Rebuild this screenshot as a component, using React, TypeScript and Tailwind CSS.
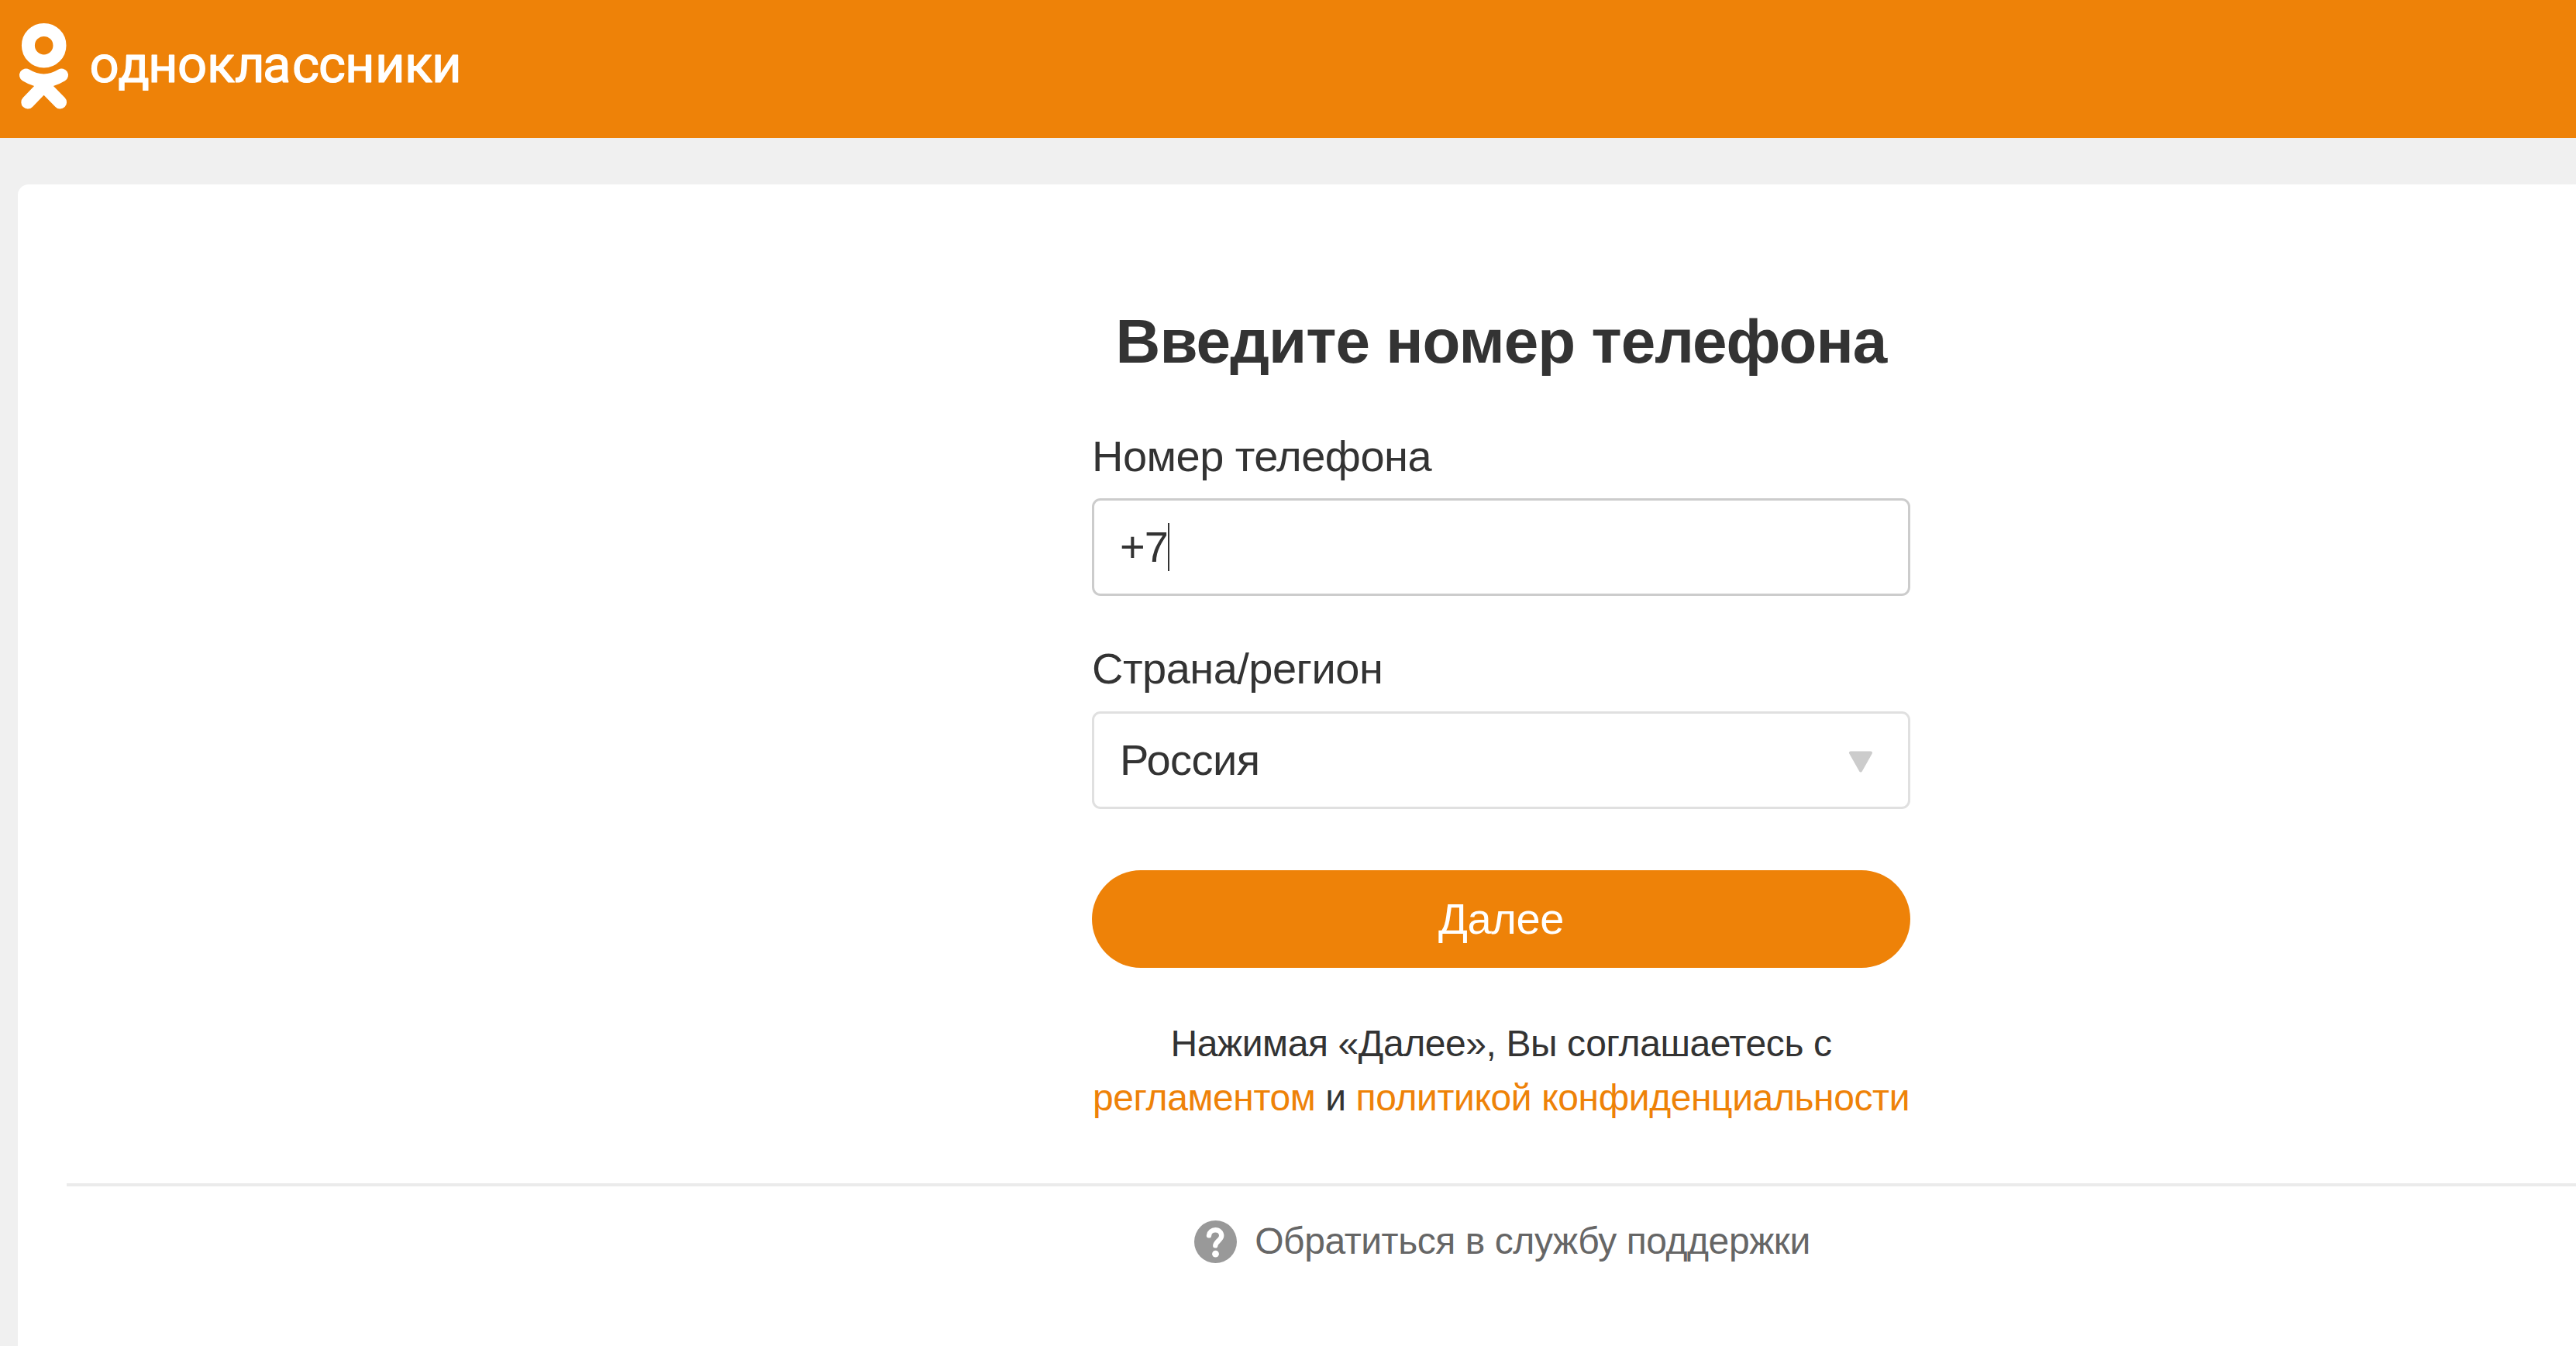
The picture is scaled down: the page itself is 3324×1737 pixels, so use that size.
import React from "react";

function Logo() {
  return (
    <svg
      className="block h-[178px] w-[620px]"
      viewBox="0 0 620 178"
      fill="none"
      aria-label="одноклассники"
    >
      <g stroke="#fff" strokeWidth="17" strokeLinecap="round">
        <circle cx="56.7" cy="58.7" r="20.3" />
        <path d="M33.5 97 Q56.5 111 79.5 97" />
        <path d="M56.5 110.5 L35.8 132 M56.5 110.5 L77.6 132" />
      </g>
      {/* thin outline rounds off the letter corners */}
      <text
        x="115.5 152.5 191 229 267 303 339 377 411 445 484 522 557"
        y="106"
        fill="#fff"
        stroke="#fff"
        strokeWidth="1.2"
        strokeLinejoin="round"
        className="font-['Roboto'] text-[67px] font-normal"
      >
        одноклассники
      </text>
    </svg>
  );
}

function Header() {
  return (
    <header className="h-[178px] bg-[#ee8208]">
      <Logo />
    </header>
  );
}

function Field({
  label,
  className,
  children,
}: {
  label: string;
  className: string;
  children: React.ReactNode;
}) {
  return (
    <div className={className}>
      <div className="text-[56px] leading-[64px] tracking-[-0.52px]">
        {label}
      </div>
      {children}
    </div>
  );
}

function HelpIcon() {
  return (
    <svg className="mt-[5px] size-[55px]" viewBox="0 0 55 55" fill="none">
      <circle cx="27.5" cy="27.5" r="27.5" fill="#999" />
      <path
        d="M19 19.3 C19.5 15 23 12.3 27.3 12.3 C32 12.3 35.2 15.5 35.2 19.8 C35.2 25 27.5 27.5 27.3 32.3"
        stroke="#fff"
        strokeWidth="6.4"
        strokeLinecap="round"
      />
      <circle cx="27.5" cy="43.2" r="4.4" fill="#fff" />
    </svg>
  );
}

export default function App() {
  return (
    <div className="h-[1737px] w-[3324px] overflow-hidden bg-[#f0f0f0] font-['Liberation_Sans',Arial,sans-serif] text-[#333]">
      <Header />
      {/* the card is wider than the viewport and runs off its right edge */}
      <main className="mt-[60px] ml-[23px] flex h-[1600px] w-[3828px] flex-col rounded-[14px] bg-white px-[63px] pt-[155px]">
        <div className="mx-auto w-[1056px]">
          <h1 className="text-center text-[80px] leading-[96px] font-bold tracking-[-0.95px] whitespace-nowrap">
            Введите номер телефона
          </h1>

          <Field label="Номер телефона" className="mt-[68px]">
            <div className="mt-[22px] flex h-[126px] items-center rounded-[11px] border-3 border-[#ccc] px-[33px] text-[56px] tracking-[-1px]">
              <span className="w-[62px]">+7</span>
              <span className="h-[62px] w-0.5 bg-[#333]" />
            </div>
          </Field>

          <Field label="Страна/регион" className="mt-[62px]">
            <div className="mt-[23px] flex h-[126px] items-center justify-between rounded-[11px] border-3 border-[#e0e0e0] pr-[45px] pl-[33px] text-[56px] tracking-[-0.5px]">
              <span>Россия</span>
              <svg className="mt-1 h-7 w-8" viewBox="0 0 32 28">
                <path
                  d="M3 2.5 H29 L16 25.5 Z"
                  fill="#ccc"
                  stroke="#ccc"
                  strokeWidth="4"
                  strokeLinejoin="round"
                />
              </svg>
            </div>
          </Field>

          <button className="mt-[79px] block h-[126px] w-full rounded-full bg-[#ee8208] text-[56px] tracking-[-0.4px] text-white">
            Далее
          </button>

          <p className="mt-[63px] text-center text-[48px] leading-[70px] tracking-[-0.41px] whitespace-nowrap">
            Нажимая «Далее», Вы соглашаетесь с
            <br />
            <a className="text-[#ee8208]">регламентом</a> и{" "}
            <a className="text-[#ee8208]">политикой конфиденциальности</a>
          </p>
        </div>

        <div className="mt-[75px] h-1 bg-[#ebebeb]" />

        <div className="mt-[39px] flex justify-center gap-[23px] pl-[3px] text-[48px] leading-[64px] tracking-[-0.43px] text-[#666]">
          <HelpIcon />
          <span>Обратиться в службу поддержки</span>
        </div>
      </main>
    </div>
  );
}
